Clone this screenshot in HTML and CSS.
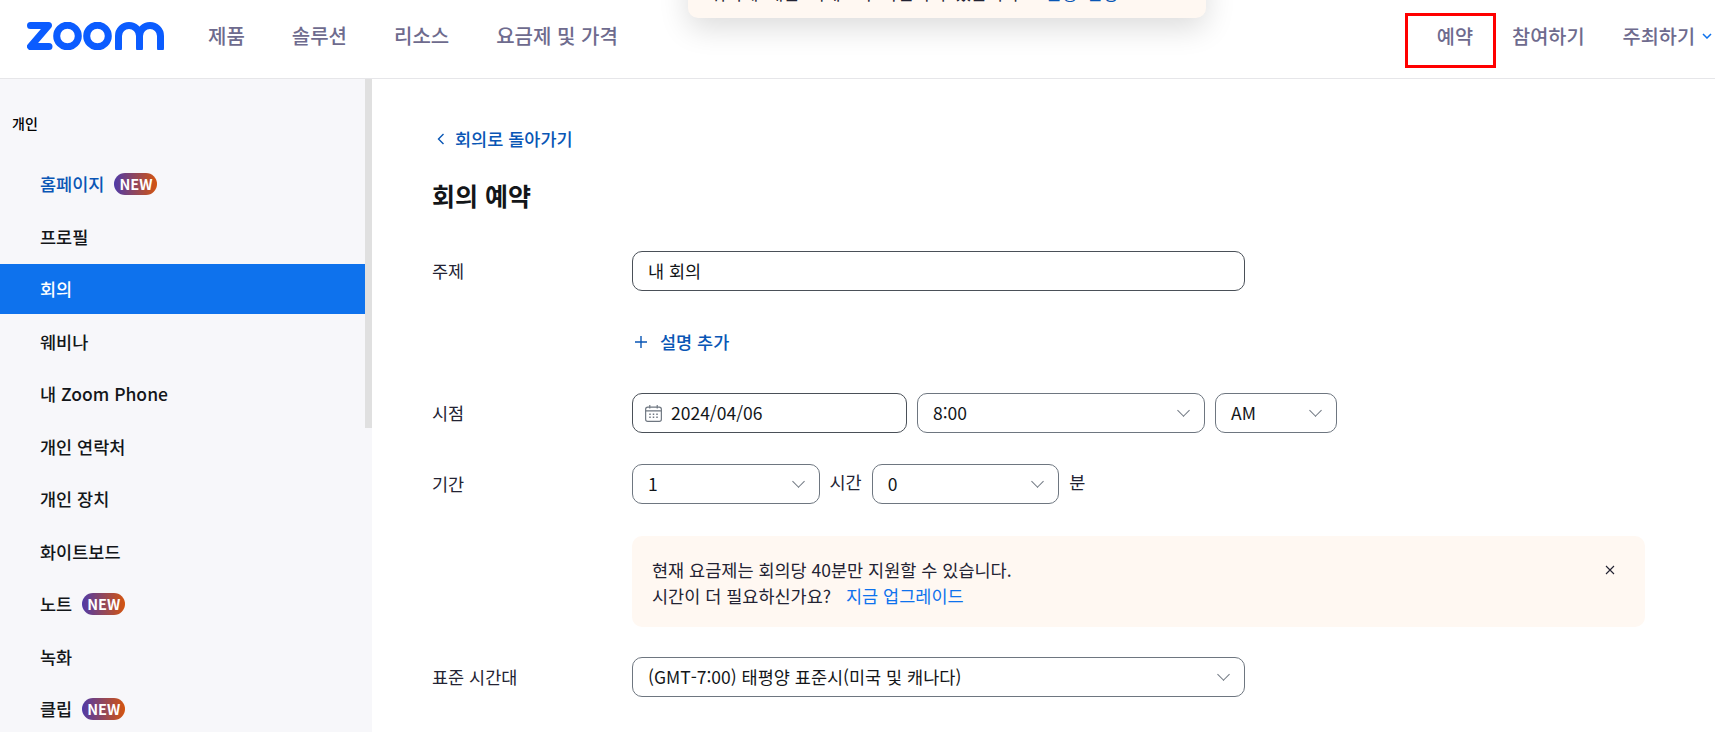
FILE: index.html
```html
<!doctype html>
<html lang="ko">
<head>
<meta charset="utf-8">
<title>회의 예약</title>
<link rel="stylesheet" href="styles.css">
</head>
<body>
	<div class="toast">
		<span>위치에 대한 액세스가 차단되어 있습니다.</span>
		<a href="#">설정 변경</a>
	</div>
	<header class="top">
		<svg class="logo" viewBox="0 0 137 28" width="137" height="28" fill="none" stroke="#0b5cff" stroke-width="7">
			<path d="M3.5 3.5H21.5L3.5 24.5H22" stroke-linejoin="round" stroke-linecap="round"/>
			<circle cx="40.5" cy="14" r="10.8"/>
			<circle cx="70.5" cy="14" r="10.8"/>
			<path d="M91.5 26V14a10.5 10.5 0 0 1 21 0V26M112.5 14a10.5 10.5 0 0 1 21 0V26" stroke-linecap="round"/>
		</svg>
		<nav class="menu">
			<a href="#">제품</a>
			<a href="#">솔루션</a>
			<a href="#">리소스</a>
			<a href="#">요금제 및 가격</a>
		</nav>
		<div class="actions">
			<a href="#" class="marked">예약</a>
			<a href="#" class="join">참여하기</a>
			<a href="#" class="host">주최하기
				<svg viewBox="0 0 10 6" width="10" height="6" fill="none" stroke="#0e72ed" stroke-width="1.5"><path d="M1 1l4 4 4-4"/></svg>
			</a>
		</div>
	</header>
	<div class="page">
		<aside class="side">
			<div class="side-title">개인</div>
			<ul class="side-list">
				<li class="current"><a href="#">홈페이지</a><span class="new">NEW</span></li>
				<li><a href="#">프로필</a></li>
				<li class="active"><a href="#">회의</a></li>
				<li><a href="#">웨비나</a></li>
				<li><a href="#">내 Zoom Phone</a></li>
				<li><a href="#">개인 연락처</a></li>
				<li><a href="#">개인 장치</a></li>
				<li><a href="#">화이트보드</a></li>
				<li><a href="#">노트</a><span class="new">NEW</span></li>
				<li><a href="#">녹화</a></li>
				<li><a href="#">클립</a><span class="new">NEW</span></li>
			</ul>
			<div class="thumb"></div>
		</aside>
		<main class="main">
			<a href="#" class="back">
				<svg viewBox="0 0 8 12" width="8" height="12" fill="none" stroke="#0956b5" stroke-width="1.4"><path d="M6.5 1L1.5 6l5 5"/></svg>
				회의로 돌아가기
			</a>
			<h1 class="title">회의 예약</h1>

			<div class="row row-topic">
				<label class="label">주제</label>
				<div class="field w-wide">내 회의</div>
			</div>
			<div class="row row-add">
				<span class="label"></span>
				<a href="#" class="add">
					<svg viewBox="0 0 12 12" width="12" height="12" fill="none" stroke="#0956b5" stroke-width="1.4"><path d="M6 0V12M0 6H12"/></svg>
					설명 추가
				</a>
			</div>
			<div class="row row-when">
				<label class="label">시점</label>
				<div class="field date">
					<svg viewBox="0 0 16 16" width="17" height="17" fill="none" stroke="#6e7680" stroke-width="1.1">
						<rect x="0.6" y="2" width="14.8" height="13.4" rx="2"/>
						<path d="M0.6 5.6H15.4M4.5 0V3.4M11.5 0V3.4"/>
						<path d="M4 8.6h1.4M7.3 8.6h1.4M10.6 8.6h1.4M4 11.6h1.4M7.3 11.6h1.4M10.6 11.6h1.4" stroke-width="1.4"/>
					</svg>
					2024/04/06
				</div>
				<div class="select w-time">8:00</div>
				<div class="select w-ampm">AM</div>
			</div>
			<div class="row row-long">
				<label class="label">기간</label>
				<div class="select w-num">1</div>
				<span class="unit">시간</span>
				<div class="select w-num">0</div>
				<span class="unit">분</span>
			</div>
			<div class="row row-note">
				<span class="label"></span>
				<div class="notice">
					<p>현재 요금제는 회의당 40분만 지원할 수 있습니다.<br>시간이 더 필요하신가요? <a href="#">지금 업그레이드</a></p>
					<svg viewBox="0 0 10 10" width="10" height="10" fill="none" stroke="#232333" stroke-width="1.1"><path d="M1 1l8 8M9 1l-8 8"/></svg>
				</div>
			</div>
			<div class="row row-zone">
				<label class="label">표준 시간대</label>
				<div class="select w-wide">(GMT-7:00) 태평양 표준시(미국 및 캐나다)</div>
			</div>
		</main>
	</div>
</body>
</html>
```

FILE: styles.css
```css
* {
	box-sizing: border-box;
}
html,
body {
	height: 100%;
}
body {
	margin: 0;
	overflow: hidden;
	font: 17.5px/24px "Noto Sans CJK KR", "Noto Sans", sans-serif;
	color: #232333;
	background: #fff;
}
a {
	color: inherit;
	text-decoration: none;
}
ul {
	list-style: none;
	margin: 0;
	padding: 0;
}

.toast {
	position: absolute;
	top: -40px;
	left: 688px;
	z-index: 5;
	width: 518px;
	height: 58px;
	padding: 21px 22px 0;
	background: #fff8f2;
	border-radius: 10px;
	box-shadow: 0 10px 30px rgba(0, 0, 0, .14);
	white-space: nowrap;
	word-spacing: 4px;
}
.toast a {
	margin-left: 12px;
	color: #0956b5;
}

.top {
	display: flex;
	align-items: center;
	height: 79px;
	padding-left: 27px;
	background: #fff;
	border-bottom: 1px solid #e6e6e9;
}
.logo {
	flex: none;
	margin-top: -6px;
}
.menu {
	display: flex;
	gap: 47px;
	margin: -7px 0 0 44px;
	font-size: 20px;
	font-weight: 500;
	color: #6e6b8e;
}
.actions {
	display: flex;
	align-items: center;
	margin-left: auto;
	margin-top: 3px;
	font-size: 19.7px;
	font-weight: 500;
	color: #6e6b8e;
}
.marked {
	display: flex;
	align-items: center;
	justify-content: flex-end;
	width: 91px;
	height: 55px;
	padding: 0 20px 9px 0;
	border: 3px solid #f00;
}
.join {
	margin: 0 0 9px 16px;
}
.host {
	display: flex;
	align-items: center;
	gap: 7px;
	margin: 0 3px 9px 38px;
}

.page {
	display: flex;
	height: calc(100% - 79px);
}
.side {
	position: relative;
	flex: none;
	width: 372px;
	padding-top: 34px;
	background: #f7f7fa;
}
.thumb {
	position: absolute;
	top: 0;
	right: 0;
	width: 7px;
	height: 349px;
	background: #e0e0e0;
}
.side-title {
	height: 20px;
	padding-left: 12px;
	font-size: 14px;
	line-height: 20px;
	font-weight: 500;
	color: #000;
}
.side-list {
	margin-top: 26px;
	margin-right: 7px;
}
.side-list li {
	display: flex;
	align-items: center;
	gap: 10px;
	height: 50px;
	margin-bottom: 2.5px;
	padding-left: 40px;
	font-weight: 500;
	color: #131619;
}
.side-list .current {
	color: #0956b5;
}
.side-list .active {
	background: #0e72ed;
	color: #fff;
}
.new {
	width: 43px;
	height: 22px;
	border-radius: 11px;
	background: linear-gradient(90deg, #4f3aa8, #d4540f);
	color: #fff;
	font-size: 14.5px;
	line-height: 22px;
	font-weight: 700;
	text-align: center;
}

.main {
	flex: 1;
	padding: 48px 0 0 60px;
}
.back {
	display: flex;
	align-items: center;
	gap: 10px;
	height: 24px;
	margin-left: 5px;
	font-weight: 500;
	color: #0956b5;
}
.title {
	margin: 27px 0 0;
	font-size: 25px;
	line-height: 34px;
	font-weight: 700;
	color: #131619;
}
.row {
	display: flex;
	align-items: center;
	gap: 10px;
}
.row-topic {
	margin-top: 39px;
}
.row-add {
	margin-top: 39px;
}
.row-when {
	margin-top: 39px;
}
.row-long {
	margin-top: 31px;
}
.row-note {
	margin-top: 32px;
	align-items: flex-start;
}
.row-zone {
	margin-top: 30px;
}
.label {
	flex: none;
	width: 200px;
	margin-right: -10px;
	color: #232333;
}
.field,
.select {
	position: relative;
	flex: none;
	height: 40px;
	padding: 0 15px;
	border: 1px solid #4a5058;
	border-radius: 10px;
	background: #fff;
	line-height: 38px;
	color: #131619;
}
.select {
	border-color: #6e7680;
}
.select::after {
	content: "";
	position: absolute;
	top: 12px;
	right: 16px;
	width: 8px;
	height: 8px;
	border-right: 1.3px solid #6e7680;
	border-bottom: 1.3px solid #6e7680;
	transform: rotate(45deg);
}
.w-wide {
	width: 613px;
}
.date {
	display: flex;
	align-items: center;
	gap: 9px;
	width: 275px;
	padding-left: 12px;
}
.w-time {
	width: 288px;
}
.w-ampm {
	width: 122px;
}
.w-num {
	width: 187.5px;
}
.unit {
	margin-top: -4px;
}
.add {
	display: flex;
	align-items: center;
	gap: 13px;
	margin-left: 3px;
	font-weight: 500;
	color: #0956b5;
}
.notice {
	display: flex;
	justify-content: space-between;
	align-items: flex-start;
	width: 1013px;
	height: 91px;
	padding: 21px 30px 0 20px;
	background: #fff8f2;
	border-radius: 10px;
}
.notice p {
	margin: 0;
	line-height: 25.5px;
}
.notice a {
	margin-left: 10px;
	color: #0e72ed;
}
.notice svg {
	margin-top: 8px;
}
```
